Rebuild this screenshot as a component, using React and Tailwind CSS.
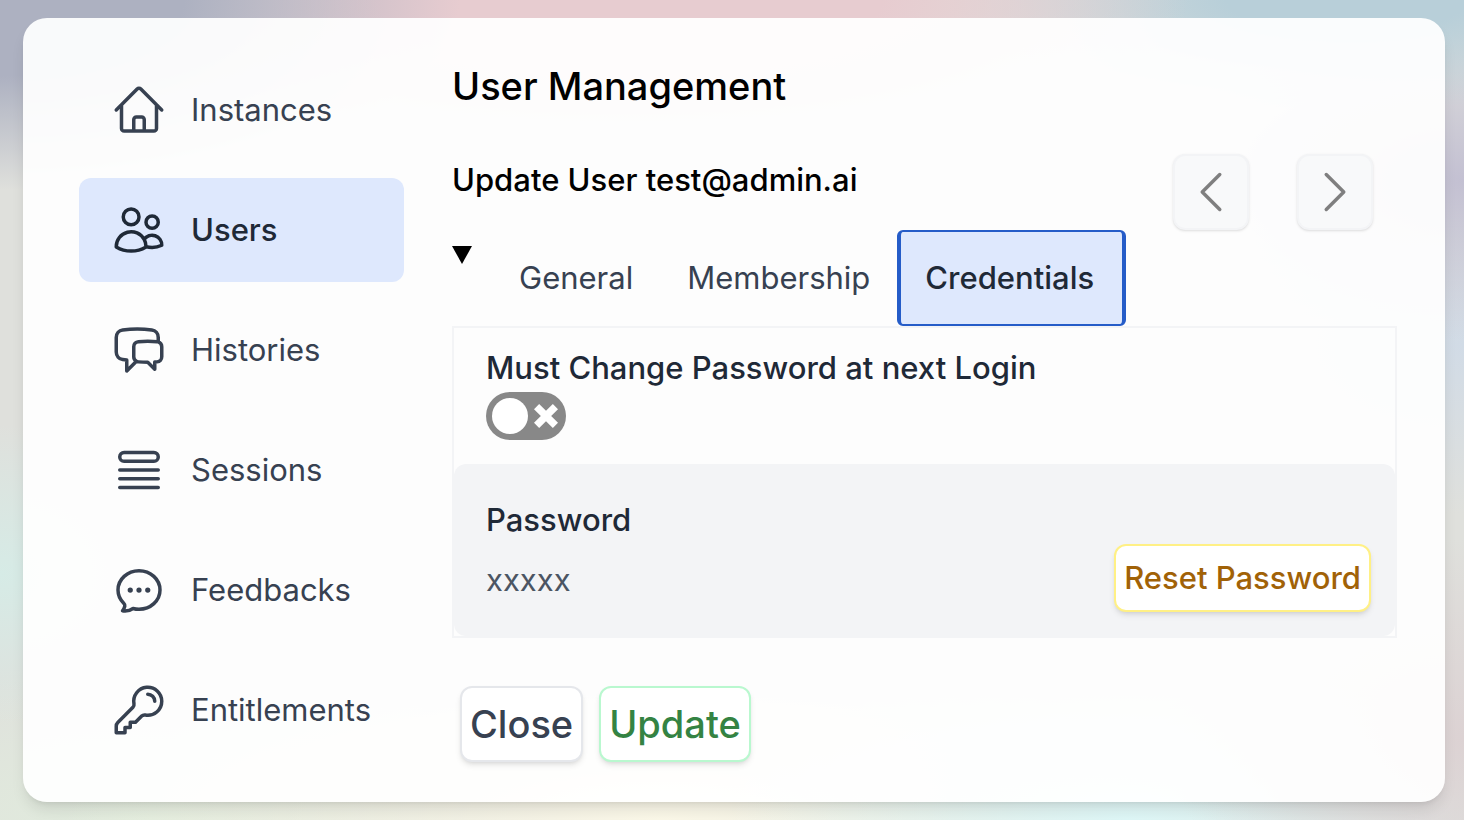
import React, { useState } from "react";
import {
  HiOutlineHome,
  HiOutlineUsers,
  HiOutlineChatBubbleLeftRight,
  HiOutlineQueueList,
  HiOutlineChatBubbleOvalLeftEllipsis,
  HiOutlineKey,
  HiOutlineChevronLeft,
  HiOutlineChevronRight,
} from "react-icons/hi2";

const NAV_ITEMS = [
  { label: "Instances", icon: HiOutlineHome },
  { label: "Users", icon: HiOutlineUsers },
  { label: "Histories", icon: HiOutlineChatBubbleLeftRight },
  { label: "Sessions", icon: HiOutlineQueueList },
  { label: "Feedbacks", icon: HiOutlineChatBubbleOvalLeftEllipsis },
  { label: "Entitlements", icon: HiOutlineKey },
];

const TABS = ["General", "Membership", "Credentials"];

const Sidebar = ({ active, onSelect }) => (
  <nav className="flex w-[325px] shrink-0 flex-col gap-4">
    {NAV_ITEMS.map(({ label, icon: Icon }) => (
      <a
        key={label}
        href={`#${label.toLowerCase()}`}
        onClick={() => onSelect(label)}
        className={
          active === label
            ? "flex items-center gap-6 rounded-xl bg-[#dee8fd] px-8 py-6 font-medium text-[#1f2937]"
            : "flex items-center gap-6 rounded-xl px-8 py-6 text-[#374151]"
        }
      >
        <Icon className="size-14" />
        {label}
      </a>
    ))}
  </nav>
);

const PagerButton = ({ label, children }) => (
  <button
    type="button"
    disabled
    aria-label={label}
    className="rounded-xl border-2 border-gray-100 bg-[#f8f9fa] p-2 text-[#7f7f7f] shadow-sm"
  >
    {children}
  </button>
);

const Toggle = ({ id, checked, onChange }) => (
  <span className="relative flex h-12 w-20">
    <input
      id={id}
      type="checkbox"
      role="switch"
      checked={checked}
      onChange={(e) => onChange(e.target.checked)}
      className="peer h-12 w-20 appearance-none rounded-full bg-[#888888] checked:bg-[#008800]"
    />
    <span className="pointer-events-none absolute top-[6px] left-[6px] size-9 rounded-full bg-white peer-checked:left-[38px]" />
    <svg
      viewBox="0 0 9.9 9.9"
      className="pointer-events-none absolute top-3 left-12 size-6 fill-white peer-checked:hidden"
    >
      <path d="M9.9 2.12 7.78 0 4.95 2.828 2.12 0 0 2.12l2.83 2.83L0 7.776 2.123 9.9 4.95 7.07 7.78 9.9 9.9 7.776 7.072 4.95 9.9 2.12" />
    </svg>
  </span>
);

const App = () => {
  const [page, setPage] = useState("Users");
  const [tab, setTab] = useState("Credentials");
  const [mustChange, setMustChange] = useState(false);

  return (
    <div className="min-h-screen bg-[#dfe0dc] bg-[radial-gradient(460px_190px_at_0%_0%,#adb1c1_40%,transparent),radial-gradient(560px_150px_at_43%_0%,#e7ccd0_45%,transparent),radial-gradient(400px_110px_at_92%_0%,#b8cfd9_30%,transparent),radial-gradient(300px_160px_at_100%_22%,#c3c0d2,transparent),radial-gradient(300px_170px_at_100%_42%,#d1dbe6,transparent),radial-gradient(200px_150px_at_0%_70%,#d6ebe6,transparent),radial-gradient(300px_200px_at_100%_90%,#dcd2d3,transparent),radial-gradient(400px_160px_at_77%_100%,#def7f7,transparent),radial-gradient(600px_160px_at_45%_100%,#fbf8e8,transparent),radial-gradient(400px_160px_at_10%_100%,#e1ecdd,transparent)] py-[18px] pr-[19px] pl-[23px] font-['Inter',sans-serif] text-[31px] leading-12">
      <div className="flex gap-12 rounded-3xl bg-white/93 py-10 pr-12 pl-14 shadow-lg">
        <Sidebar active={page} onSelect={setPage} />

        <main className="min-w-0 flex-1">
          <h1 className="text-[38px] leading-[56px] font-medium text-black">
            User Management
          </h1>

          <div className="mt-10 flex h-[76px] items-start justify-between pr-6">
            <h2 className="pt-[2px] font-medium text-black">
              Update User test@admin.ai
            </h2>
            <div className="flex gap-12">
              <PagerButton label="Previous user">
                <HiOutlineChevronLeft className="size-14" />
              </PagerButton>
              <PagerButton label="Next user">
                <HiOutlineChevronRight className="size-14" />
              </PagerButton>
            </div>
          </div>

          <div className="flex items-start">
            <svg viewBox="0 0 20 18" className="mt-4 h-[18px] w-5 fill-black">
              <path d="M0 0h20L10 18z" />
            </svg>
            <div role="tablist" className="ml-5 flex">
              {TABS.map((name) => (
                <button
                  key={name}
                  type="button"
                  role="tab"
                  aria-selected={tab === name}
                  onClick={() => setTab(name)}
                  className={
                    tab === name
                      ? "rounded-md border-x-4 border-y-2 border-[#255cc8] bg-[#dee8fd] py-[22px] pr-7 pl-6 font-medium text-[#1f2937]"
                      : "px-[27px] py-6 text-[#374151]"
                  }
                >
                  {name}
                </button>
              ))}
            </div>
          </div>

          <section className="border-2 border-gray-100">
            <div className="px-8 pt-4 pb-6">
              <label
                htmlFor="must-change"
                className="block font-medium text-[#1f2937]"
              >
                Must Change Password at next Login
              </label>
              <Toggle
                id="must-change"
                checked={mustChange}
                onChange={setMustChange}
              />
            </div>
            <div className="flex items-end justify-between rounded-xl bg-gray-100 pt-8 pr-6 pb-6 pl-8">
              <dl className="pb-2">
                <dt className="font-medium text-[#1f2937]">Password</dt>
                <dd className="mt-3 text-[#4b5563]">xxxxx</dd>
              </dl>
              <button
                type="button"
                className="rounded-xl border-2 border-yellow-200 bg-white p-2 font-medium text-[#a16207] shadow-md"
              >
                Reset Password
              </button>
            </div>
          </section>

          <div className="mt-12 flex gap-4 pl-2 text-[38px] leading-[56px] font-medium">
            <button
              type="button"
              className="rounded-xl border-2 border-gray-200 bg-white p-2 text-[#374151] shadow-md"
            >
              Close
            </button>
            <button
              type="button"
              className="rounded-xl border-2 border-green-200 bg-white p-2 text-[#348343] shadow-md"
            >
              Update
            </button>
          </div>
        </main>
      </div>
    </div>
  );
};

export default App;
